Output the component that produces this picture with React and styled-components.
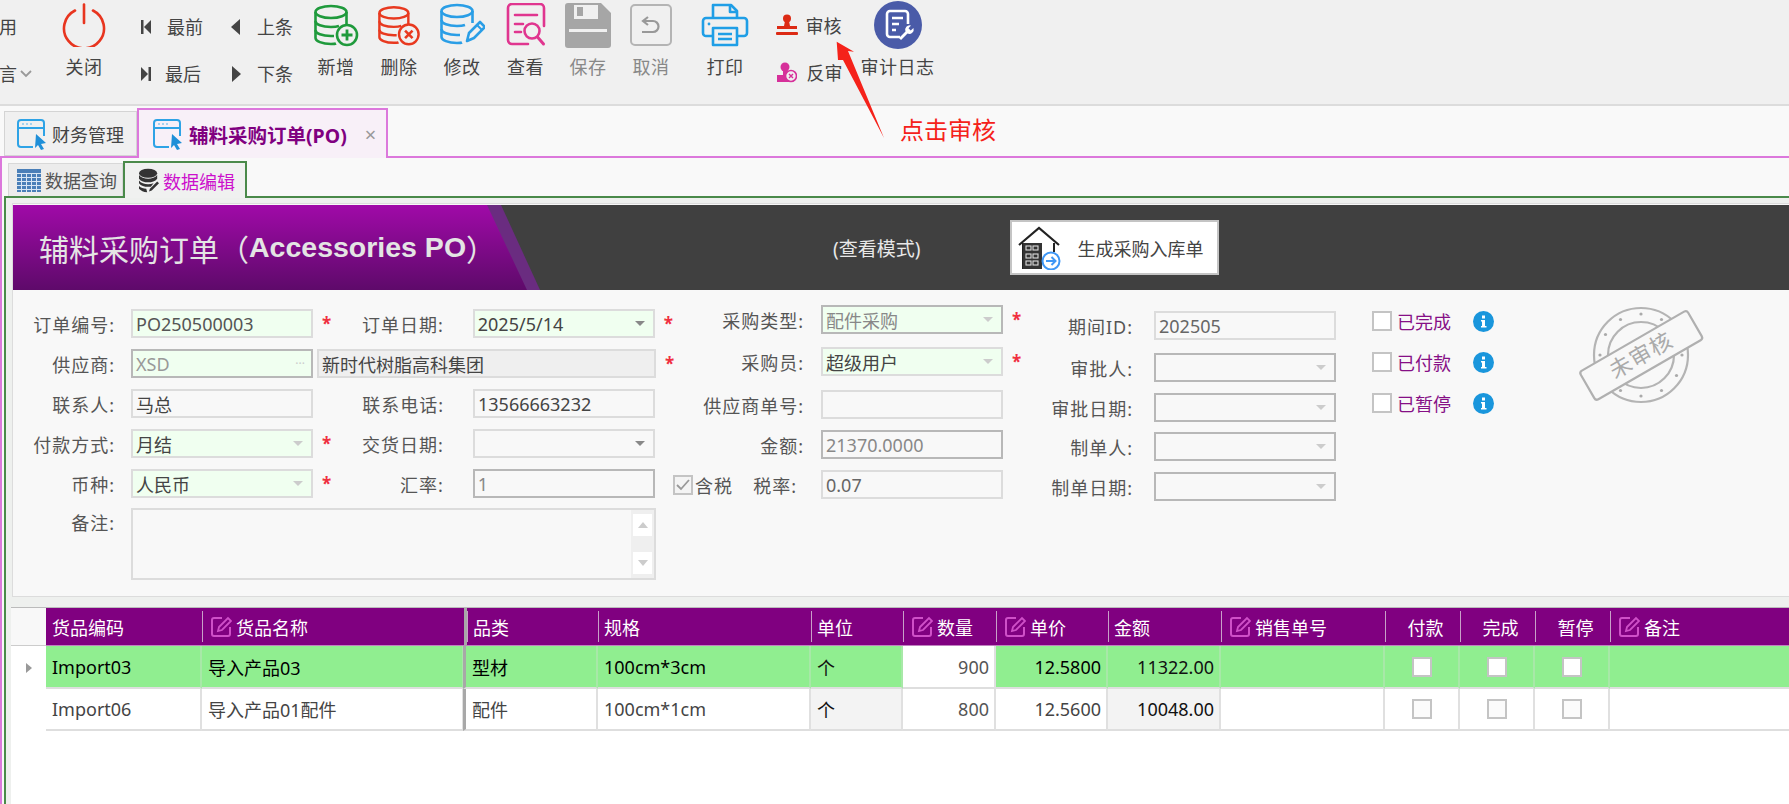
import React from "react";
import styled, { createGlobalStyle } from "styled-components";

const Global = createGlobalStyle`
  html, body { margin: 0; padding: 0; background: #fff; }
  body { width: 1789px; height: 804px; overflow: hidden; font-family: "Noto Sans", "Noto Sans CJK SC", sans-serif; font-size: 18px; color: #444; }
  * { box-sizing: border-box; }
`;

const Page = styled.div`
  position: relative; width: 1789px; height: 804px; overflow: hidden;
  display: flex; flex-direction: column; background: #f9f9f9;
`;

/* ---------- toolbar ---------- */
const Toolbar = styled.div`
  height: 106px; flex: none; display: flex; align-items: flex-start; padding-top: 2px;
  background: #f0f0f0; border-bottom: 2px solid #dcdcdc; line-height: 24px;
`;
const Stub = styled.div`
  width: 60px; flex: none; display: flex; flex-direction: column; gap: 23px; padding-top: 13px; margin-left: -1px;
`;
const StubLine = styled.div` display: flex; align-items: center; gap: 3px; height: 24px; `;
const ToolButton = styled.div`
  width: ${p => p.$w}px; flex: none; display: flex; flex-direction: column; align-items: center;
  color: ${p => (p.$off ? "#888" : "#444")};
`;
const ToolIcon = styled.div` height: 46px; display: flex; align-items: center; justify-content: center; `;
const ToolLabel = styled.div` margin-top: 7px; white-space: nowrap; letter-spacing: .5px; `;
const NavGrid = styled.div`
  width: 195.5px; flex: none; display: grid; grid-template-columns: 91px 1fr; grid-auto-rows: 47px;
  padding: 1px 0 0 31px; 
`;
const NavItem = styled.div` display: flex; align-items: center; gap: ${p => p.$gap}px; `;
const AuditPair = styled.div`
  width: 91px; flex: none; padding-left: 9px; display: flex; flex-direction: column; 
`;
const AuditItem = styled.div` height: 47px; display: flex; align-items: center; gap: ${p => p.$gap}px; `;

/* ---------- tabs ---------- */
const TabStrip = styled.div`
  height: 50px; flex: none; display: flex; align-items: flex-end; padding-left: 4px; position: relative; z-index: 1;
`;
const PageTab = styled.div`
  display: flex; align-items: center; flex: none;
  width: ${p => p.$w}px; height: ${p => (p.$active ? 50 : 45)}px;
  padding-left: ${p => (p.$active ? 13 : 11)}px; gap: ${p => (p.$active ? 5 : 4)}px;
  background: ${p => (p.$active ? "#f8f0f8" : "#f0f0f0")};
  border: ${p => (p.$active ? "2px solid #dc78dc" : "1px solid #d4d4d4")};
  border-bottom: ${p => (p.$active ? "none" : "1px solid #d4d4d4")};
  color: ${p => (p.$active ? "#800080" : "#444")};
  font-weight: ${p => (p.$active ? 700 : 400)};
  font-size: ${p => (p.$active ? 19.5 : 18)}px;
  margin-bottom: ${p => (p.$active ? -2 : 0)}px;
`;
const TabClose = styled.span` margin-left: 13px; color: #999; font-weight: 400; font-size: 20px; `;
const Outer = styled.div`
  flex: 1; min-height: 0; display: flex; flex-direction: column; padding-left: 2px;
  border-top: 2px solid #dc78dc; border-left: 2px solid #dc78dc;
`;
const SubStrip = styled.div`
  height: 38px; flex: none; display: flex; align-items: flex-end; padding-left: 4px; position: relative; z-index: 1;
`;
const SubTab = styled.div`
  flex: none; width: ${p => p.$w}px; height: ${p => (p.$active ? 37 : 33)}px; display: flex; align-items: center;
  gap: 4px; padding-left: ${p => (p.$active ? 14 : 8)}px;
  background: ${p => (p.$active ? "#f0f1f0" : "#ececec")};
  border: ${p => (p.$active ? "2px solid #4a8a4a" : "1px solid #d8d8d8")};
  border-bottom: none;
  color: ${p => (p.$active ? "#cc10cc" : "#555")};
  margin-bottom: ${p => (p.$active ? -2 : 0)}px;
`;
const EditPanel = styled.div`
  flex: 1; min-height: 0; display: flex; flex-direction: column; padding: 5px 0 0 5px; background: #eef0ee;
  border-top: 2px solid #4a8a4a; border-left: 2px solid #4a8a4a;
`;

/* ---------- form ---------- */
const FormPanel = styled.div`
  height: 394px; flex: none; margin-left: 1px; border: 1px solid #dcdcdc; border-right: none; padding-top: 1px;
  display: flex; flex-direction: column; background: #f8f8f8;
`;
const Banner = styled.div` height: 85px; flex: none; display: flex; align-items: center; background: #404040; `;
const TitleEdge = styled.div`
  width: 527px; height: 100%; flex: none; background: #6a2c80;
  clip-path: polygon(0 0, 488px 0, 527px 100%, 0 100%);
`;
const TitleBlock = styled.div`
  width: 514px; height: 100%; padding-left: 26px; display: flex; align-items: center;
  background: linear-gradient(180deg, #a00aa8 0%, #5e0a6a 100%);
  clip-path: polygon(0 0, 474px 0, 514px 100%, 0 100%);
  color: #e4e4e4; font-size: 30px; white-space: nowrap;
  b { font-family: "Liberation Sans", sans-serif; font-size: 28.5px; }
`;
const Mode = styled.div` margin-left: 293px; color: #e8e8e8; font-size: 19px; white-space: nowrap; `;
const MakeButton = styled.div`
  margin-left: 90px; width: 209px; height: 55px; flex: none; display: flex; align-items: center; gap: 16px; padding-left: 6px;
  background: #fff; border: 2px solid #c4c4c4; color: #444;
`;
const FormBody = styled.div` flex: 1; display: flex; align-items: flex-start; padding-top: 15px; `;
const LeftBlock = styled.div` width: 660px; flex: none; margin-top: 4px; display: flex; flex-direction: column; gap: 11px; `;
const Row = styled.div` display: flex; align-items: ${p => (p.$top ? "flex-start" : "center")}; height: ${p => p.$h || 29}px; `;
const Label = styled.div`
  width: ${p => p.$w}px; flex: none; text-align: right; white-space: nowrap; letter-spacing: 1px;
  margin-right: ${p => p.$gap}px; margin-left: ${p => (p.$push ? "auto" : "0")}; color: #555;
`;
const Input = styled.div`
  width: ${p => p.$w || 182}px; height: ${p => p.$h || 29}px; flex: none;
  display: flex; align-items: center; padding: 0 4px 0 3px; white-space: nowrap; overflow: hidden;
  background: ${p => (p.$need ? "#f0fff0" : p.$fill ? "#efefef" : "#f8f8f8")};
  border: 2px solid ${p => (p.$dark ? "#b8b8b8" : "#dcdcdc")};
  color: ${p => p.$color || "#444"};
  margin-left: ${p => p.$ml || 0}px;
`;
const Caret = styled.span`
  margin-left: auto; margin-right: 4px; width: 0; height: 0; flex: none;
  border-left: 5px solid transparent; border-right: 5px solid transparent;
  border-top: 5px solid ${p => (p.$dark ? "#888" : "#ccc")};
`;
const Dots = styled.span` margin-left: auto; color: #ccc; font-size: 12px; letter-spacing: 0; line-height: 1; margin-right: 2px; `;
const Star = styled.span`
  color: #f03040; font-size: 17px; font-weight: 700; margin-left: ${p => p.$ml || 9}px; line-height: 20px;
  visibility: ${p => (p.$ghost ? "hidden" : "visible")};
`;
const RemarkBox = styled(Input)` height: 72px; padding: 0; justify-content: flex-end; margin-top: -1px; `;
const ScrollBar = styled.div` width: 23px; height: 100%; background: #efefef; display: flex; flex-direction: column; justify-content: space-between; padding: 4px 2px; `;
const ScrollBtn = styled.div`
  height: 22px; background: #fff; display: flex; align-items: center; justify-content: center;
  &::before { content: ""; border-left: 5px solid transparent; border-right: 5px solid transparent;
    ${p => (p.$up ? "border-bottom" : "border-top")}: 6px solid #ccc; }
`;
const Col = styled.div` flex: none; width: ${p => p.$w}px; padding-top: ${p => p.$pt || 0}px; display: flex; flex-direction: column; `;
const ColRow = styled(Row)` margin-top: ${p => p.$mt || 0}px; `;
const TaxLabel = styled.div` width: 131px; flex: none; margin-right: 17px; display: flex; align-items: center; justify-content: space-between; color: #555; letter-spacing: 1px; `;
const TaxCheck = styled.div` display: flex; align-items: center; gap: 2px; `;
const TaxName = styled.span` padding-right: 7px; `;
const Box = styled.span`
  width: ${p => p.$s || 20}px; height: ${p => p.$s || 20}px; flex: none; display: inline-flex; align-items: center; justify-content: center;
  background: ${p => p.$bg || "#fff"}; border: 2px solid #c4c4c4;
`;
const FlagCol = styled.div` flex: none; margin-left: 36px; padding-top: 6px; display: flex; flex-direction: column; gap: 21px; `;
const Flag = styled.div` display: flex; align-items: center; height: 20px; color: #860f86; `;
const FlagText = styled.span` margin-left: 5px; width: 76px; white-space: nowrap; `;
const StampWrap = styled.div` margin-left: 79px; flex: none; width: 136px; height: 100px; `;
const Band = styled.div` height: 10px; flex: none; `;

/* ---------- grid ---------- */
const Grid = styled.div`
  flex: 1; min-height: 0; background: #fff; border-top: 1px solid #bbb;
  display: grid; align-content: start;
  grid-template-columns: 35px 156px 262px 134px 213px 92px 93px 112px 113px 164px 75px 75px 75px 195px;
  grid-template-rows: 38px 43px 42px;
`;
const Corner = styled.div` background: #f8f8f8; border-bottom: 1px solid #ccc; `;
const RowHead = styled.div`
  display: flex; align-items: center; justify-content: center; padding-left: 1px;
  &::before { content: ""; ${p => p.$on ? "border-top:5px solid transparent;border-bottom:5px solid transparent;border-left:6px solid #999;" : ""} }
`;
const Head = styled.div`
  position: relative; background: #800080; color: #fff; display: flex; align-items: center; gap: 4px; white-space: nowrap;
  padding-left: ${p => (p.$icon ? 8 : 6)}px; justify-content: ${p => (p.$center ? "center" : "flex-start")};
  border-bottom: 1px solid #c080c0;
  ${p => p.$first ? "" : `&::before { content: ""; position: absolute; left: 0; top: 3px; bottom: 3px; width: 1px; background: #c8a0c8; }`}
  ${p => p.$thick ? "border-left: 3px solid #a8a8a8;" : ""}
`;
const Cell = styled.div`
  display: flex; align-items: center; white-space: nowrap; padding: 0 5px 0 6px;
  justify-content: ${p => p.$align || "flex-start"};
  background: ${p => p.$bg};
  color: ${p => p.$color || "#444"};
  border-right: 2px solid ${p => (p.$hi ? "#a8e8a8" : "#e0e0e0")};
  border-bottom: 2px solid #dedede;
  ${p => p.$thick ? "border-left: 3px solid #a8a8a8; margin-left: -1px;" : ""}
`;

/* ---------- overlay ---------- */
const ArrowMark = styled.svg` position: absolute; left: 830px; top: 36px; `;
const Note = styled.div` position: absolute; left: 900px; top: 113px; color: #f5221a; font-size: 24px; line-height: 34px; white-space: nowrap; `;

/* ---------- icons ---------- */
const PowerIcon = () => (
  <svg width="44" height="44" viewBox="0 0 44 44" fill="none" stroke="#e8351f" strokeWidth="2.6" strokeLinecap="round">
    <path d="M13 7.5A20 20 0 1 0 31 7.5" /><path d="M22 1.5V20" />
  </svg>
);
const DbBase = ({ c }) => (
  <g fill="none" stroke={c} strokeWidth="2.6">
    <ellipse cx="17" cy="8" rx="15.5" ry="6" />
    <path d="M1.5 8V34C1.5 37 8 40 17 40c2 0 4 0 5-.5" />
    <path d="M32.5 8V20" />
    <path d="M1.5 17c0 3.5 6.5 6 15.5 6 3 0 6-.3 8-1" />
    <path d="M1.5 26c0 3.5 6.5 6 15.5 6h3" />
  </g>
);
const DbAdd = () => (
  <svg width="45" height="43" viewBox="0 0 45 43">
    <DbBase c="#1f9a3c" /><circle cx="33" cy="31" r="10" fill="#f0f0f0" stroke="#1f9a3c" strokeWidth="2.6" />
    <path d="M33 25.5v11M27.5 31h11" stroke="#1f9a3c" strokeWidth="2.8" />
  </svg>
);
const DbDel = () => (
  <svg width="42" height="43" viewBox="0 0 45 43">
    <DbBase c="#e8391f" /><circle cx="33" cy="31" r="10.5" fill="#f0f0f0" stroke="#e8391f" strokeWidth="2.6" />
    <path d="M29 27l8 8M37 27l-8 8" stroke="#e8391f" strokeWidth="2.8" />
  </svg>
);
const DbEdit = () => (
  <svg width="45" height="45" viewBox="0 0 45 45">
    <DbBase c="#2a9ee6" />
    <path d="M27 38l2-8 11-11 5 5-11 11z" fill="#f0f0f0" stroke="#2a9ee6" strokeWidth="2.6" strokeLinejoin="round" />
    <path d="M37 22l5 5" stroke="#2a9ee6" strokeWidth="2" />
  </svg>
);
const ViewIcon = () => (
  <svg width="40" height="44" viewBox="0 0 40 44" fill="none" stroke="#e0358f" strokeWidth="2.6" strokeLinecap="round">
    <path d="M22 41H6a4 4 0 0 1-4-4V5a4 4 0 0 1 4-4h28a4 4 0 0 1 4 4v18" />
    <path d="M9 12h22M9 21h8M9 29h6" />
    <circle cx="26" cy="28" r="7.5" /><path d="M31.5 34l6 7" strokeWidth="3" />
  </svg>
);
const SaveIcon = () => (
  <svg width="46" height="45" viewBox="0 0 46 45">
    <path d="M3 0H36L46 10V42a3 3 0 0 1-3 3H3a3 3 0 0 1-3-3V3a3 3 0 0 1 3-3z" fill="#a6a6a6" />
    <rect x="9" y="2" width="24" height="14" fill="#f0f0f0" /><rect x="12" y="4" width="6" height="9" fill="#a6a6a6" />
    <rect x="4" y="26" width="38" height="3" fill="#f0f0f0" />
  </svg>
);
const UndoIcon = () => (
  <svg width="42" height="42" viewBox="0 0 42 42" fill="none" stroke="#b4b4b4" strokeWidth="2">
    <rect x="1" y="1" width="40" height="40" rx="4" />
    <path d="M18 13l-5 4 5 4M13.500 17H23a5.500 5.500 0 0 1 0 11H12" stroke="#999" strokeWidth="2.2" />
  </svg>
);
const PrintIcon = () => (
  <svg width="48" height="44" viewBox="0 0 48 44" fill="none" stroke="#1f9ee6" strokeWidth="2.6" strokeLinejoin="round">
    <path d="M12 15V2h18l6 6v7" /><path d="M29 2v7h7" />
    <path d="M11 33H5a3 3 0 0 1-3-3V18a3 3 0 0 1 3-3h38a3 3 0 0 1 3 3v12a3 3 0 0 1-3 3h-6" />
    <rect x="12" y="25" width="24" height="17" strokeWidth="2.6" />
    <path d="M17 31h14M17 36h14" strokeWidth="2.6" />
    <circle cx="8" cy="21" r="1.4" fill="#1f9ee6" stroke="none" />
  </svg>
);
const StampIcon = () => (
  <svg width="22" height="23" viewBox="0 0 22 23" fill="#dc2a14">
    <circle cx="11" cy="4.500" r="4" /><path d="M9 7h4l1 5h7v3H1v-3h7z" /><rect x="0" y="18" width="22" height="3" rx="1" />
  </svg>
);
const UnstampIcon = () => (
  <svg width="21" height="21" viewBox="0 0 21 21">
    <circle cx="9" cy="5" r="4.500" fill="#d6309a" /><path d="M7 8h4v5h2v7H1v-7h6z" fill="#d6309a" />
    <circle cx="15" cy="14" r="5.500" fill="#f0f0f0" stroke="#d6309a" strokeWidth="1.600" />
    <path d="M13 12l4 4M17 12l-4 4" stroke="#d6309a" strokeWidth="1.400" />
  </svg>
);
const LogIcon = () => (
  <svg width="48" height="48" viewBox="0 0 48 48">
    <circle cx="24" cy="24" r="24" fill="#4a5ba8" />
    <path d="M26 36H16a3 3 0 0 1-3-3V13a3 3 0 0 1 3-3h15a3 3 0 0 1 3 3v10" fill="none" stroke="#fff" strokeWidth="2.600" />
    <path d="M18 17h11M18 23h7M18 29h4" stroke="#fff" strokeWidth="2.400" />
    <path d="M25 37l6.500-6.500a4.500 4.500 0 0 1 5.500-6l-2.500 2.800 2.200 2.200 2.800-2.500a4.500 4.500 0 0 1-6 5.500L27 39z" fill="#fff" />
  </svg>
);
const SkipIcon = ({ dir }) => (
  <svg width="12" height="16" viewBox="0 0 12 16" fill="#444">
    {dir === "first" ? <><rect x="1" y="1" width="2.500" height="14" /><path d="M11 1v14L4 8z" /></> : <><rect x="8.500" y="1" width="2.500" height="14" /><path d="M1 1v14l7-7z" /></>}
  </svg>
);
const TriIcon = ({ dir }) => (
  <svg width="10" height="16" viewBox="0 0 10 16" fill="#444">
    <path d={dir === "left" ? "M9 0v16L0 8z" : "M1 0v16l9-8z"} />
  </svg>
);
const Chevron = () => (
  <svg width="12" height="8" viewBox="0 0 12 8" fill="none" stroke="#999" strokeWidth="1.800"><path d="M1 1l5 5 5-5" /></svg>
);
const WindowIcon = () => (
  <svg width="32" height="32" viewBox="0 0 32 32" fill="none">
    <path d="M17 29H5a3 3 0 0 1-3-3V5a3 3 0 0 1 3-3h20a3 3 0 0 1 3 3v13" stroke="#2ea3e6" strokeWidth="2" />
    <path d="M2 10h26" stroke="#2ea3e6" strokeWidth="2" />
    <circle cx="7" cy="6" r="1" fill="#8cc8ee" /><circle cx="11" cy="6" r="1" fill="#8cc8ee" /><circle cx="15" cy="6" r="1" fill="#8cc8ee" />
    <path d="M20 16l10 9-5 1 3 5-3 1-3-5-3 3z" fill="#1f8fd8" />
  </svg>
);
const TableIcon = () => (
  <svg width="24" height="23" viewBox="0 0 24 23">
    <rect width="24" height="23" fill="#4a7fb8" />
    {[5, 10, 15, 20].map(x => <rect key={x} x={x - 1} y="4" width="1" height="19" fill="#d8e6f4" />)}
    {[4, 8, 12, 16, 20].map(y => <rect key={y} x="0" y={y} width="24" height="1" fill="#d8e6f4" />)}
  </svg>
);
const StackIcon = () => (
  <svg width="20" height="25" viewBox="0 0 22 26" fill="#333">
    <ellipse cx="10" cy="5" rx="10" ry="5" />
    <path d="M0 7c2 3 6 4 10 4s8-1 10-4v4c-2 3-6 4-10 4S2 14 0 11z" />
    <path d="M0 13c2 3 6 4 10 4 2 0 4-.2 6-1l-3 4H10c-4 0-8-1-10-4z" />
    <path d="M0 19c2 2 5 3 8 3l1 4c-4 0-7-2-9-4z" />
    <path d="M12 22l8-8 2 2-8 8-3 1z" />
  </svg>
);
const HouseIcon = () => (
  <svg width="43" height="44" viewBox="0 0 43 44">
    <path d="M1 19L21 2l20 17" fill="none" stroke="#222" strokeWidth="2.200" />
    <path d="M5 17V43M36 17V26" fill="none" stroke="#222" strokeWidth="2" />
    <rect x="5" y="17" width="19" height="26" fill="#333" />
    {[20, 28, 35].map(y => [8, 15].map(x => <rect key={`${x}${y}`} x={x} y={y} width="5" height="4" fill="none" stroke="#ddd" strokeWidth="1.100" />))}
    <circle cx="33" cy="35" r="8.500" fill="#fff" stroke="#3f97f5" strokeWidth="2" />
    <path d="M28 35h9M33.500 31l4 4-4 4" fill="none" stroke="#3f97f5" strokeWidth="2" />
  </svg>
);
const InfoIcon = () => (
  <svg width="21" height="21" viewBox="0 0 21 21" style={{ flex: "none" }}>
    <circle cx="10.500" cy="10.500" r="10.500" fill="#1a96dc" />
    <rect x="9" y="4.500" width="3" height="3" fill="#fff" /><path d="M8 9h4v6h1.500v1.500h-5.500V15H9v-4.500H8z" fill="#fff" />
  </svg>
);
const TickIcon = () => (
  <svg width="14" height="12" viewBox="0 0 14 12" fill="none" stroke="#999" strokeWidth="1.800"><path d="M1 6l4 4 8-9" /></svg>
);
const EditMark = ({ s = 22 }) => (
  <svg width={s} height={s} viewBox="0 0 22 22" fill="none" stroke="#cf50c8" strokeWidth="2" style={{ flex: "none" }}>
    <path d="M12 2H4a2 2 0 0 0-2 2v14a2 2 0 0 0 2 2h14a2 2 0 0 0 2-2V11" />
    <path d="M8 15l1-4 9-9 3 3-9 9z" strokeWidth="1.800" />
  </svg>
);
const Seal = () => {
  const dots = [];
  for (let a = 0; a < 360; a += 30) {
    const r = (a * Math.PI) / 180;
    dots.push(<circle key={a} cx={68 + 41 * Math.cos(r)} cy={50 + 41 * Math.sin(r)} r="1.600" fill="#aaa" />);
  }
  return (
    <svg width="136" height="100" viewBox="0 0 136 100">
      <circle cx="68" cy="50" r="47" fill="none" stroke="#b4b4b4" strokeWidth="2.200" />
      <circle cx="68" cy="50" r="33" fill="none" stroke="#b4b4b4" strokeWidth="2.200" />
      {dots}
      <g transform="rotate(-30 68 50)">
        <rect x="6" y="34" width="124" height="33" rx="3" fill="#f8f8f8" stroke="#b0b0b0" strokeWidth="2.200" />
        <text x="68" y="58" textAnchor="middle" fontSize="22" fill="#aaa" fontFamily="Noto Sans CJK SC, sans-serif" letterSpacing="1">未审核</text>
      </g>
    </svg>
  );
};

const columns = [
  { t: "货品编码", first: true },
  { t: "货品名称", e: true },
  { t: "品类", thick: true },
  { t: "规格" },
  { t: "单位" },
  { t: "数量", e: true },
  { t: "单价", e: true },
  { t: "金额" },
  { t: "销售单号", e: true },
  { t: "付款", c: true },
  { t: "完成", c: true },
  { t: "暂停", c: true },
  { t: "备注", e: true },
];
const rows = [
  { hi: true, v: ["Import03", "导入产品03", "型材", "100cm*3cm", "个", "900", "12.5800", "11322.00"] },
  { hi: false, v: ["Import06", "导入产品01配件", "配件", "100cm*1cm", "个", "800", "12.5600", "10048.00"] },
];

const GridRow = ({ row }) => {
  const bg = row.hi ? "#90ee90" : "#fff";
  const strong = row.hi ? "#000" : "#444";
  return (
    <>
      <RowHead $on={row.hi} />
      <Cell $bg={bg} $hi={row.hi} $color={strong}>{row.v[0]}</Cell>
      <Cell $bg={bg} $hi={row.hi} $color={strong}>{row.v[1]}</Cell>
      <Cell $bg={bg} $hi={row.hi} $color={strong} $thick>{row.v[2]}</Cell>
      <Cell $bg={bg} $hi={row.hi} $color={strong}>{row.v[3]}</Cell>
      <Cell $bg={row.hi ? bg : "#f3f3f3"} $hi={row.hi} $color="#111">{row.v[4]}</Cell>
      <Cell $bg="#fff" $align="flex-end" $color="#555">{row.v[5]}</Cell>
      <Cell $bg={bg} $hi={row.hi} $align="flex-end" $color={strong}>{row.v[6]}</Cell>
      <Cell $bg={row.hi ? bg : "#f3f3f3"} $hi={row.hi} $align="flex-end" $color="#111">{row.v[7]}</Cell>
      <Cell $bg={bg} $hi={row.hi} />
      {[0, 1, 2].map(i => (
        <Cell key={i} $bg={bg} $hi={row.hi} $align="center"><Box $bg={row.hi ? "#fff" : "#fbfbfb"} /></Cell>
      ))}
      <Cell $bg={bg} $hi={row.hi} />
    </>
  );
};

export default function App() {
  return (
    <Page>
      <Global />
      <Toolbar>
        <Stub>
          <StubLine>用</StubLine>
          <StubLine>言<Chevron /></StubLine>
        </Stub>
        <ToolButton $w={50}><ToolIcon><PowerIcon /></ToolIcon><ToolLabel>关闭</ToolLabel></ToolButton>
        <NavGrid>
          <NavItem $gap={15}><SkipIcon dir="first" />最前</NavItem>
          <NavItem $gap={16}><TriIcon dir="left" />上条</NavItem>
          <NavItem $gap={13}><SkipIcon dir="last" />最后</NavItem>
          <NavItem $gap={16}><TriIcon dir="right" />下条</NavItem>
        </NavGrid>
        <ToolButton $w={63}><ToolIcon><DbAdd /></ToolIcon><ToolLabel>新增</ToolLabel></ToolButton>
        <ToolButton $w={63}><ToolIcon><DbDel /></ToolIcon><ToolLabel>删除</ToolLabel></ToolButton>
        <ToolButton $w={63}><ToolIcon><DbEdit /></ToolIcon><ToolLabel>修改</ToolLabel></ToolButton>
        <ToolButton $w={64}><ToolIcon><ViewIcon /></ToolIcon><ToolLabel>查看</ToolLabel></ToolButton>
        <ToolButton $w={61} $off><ToolIcon><SaveIcon /></ToolIcon><ToolLabel>保存</ToolLabel></ToolButton>
        <ToolButton $w={65} $off><ToolIcon><UndoIcon /></ToolIcon><ToolLabel>取消</ToolLabel></ToolButton>
        <ToolButton $w={83}><ToolIcon><PrintIcon /></ToolIcon><ToolLabel>打印</ToolLabel></ToolButton>
        <AuditPair>
          <AuditItem $gap={8}><StampIcon />审核</AuditItem>
          <AuditItem $gap={10}><UnstampIcon />反审</AuditItem>
        </AuditPair>
        <ToolButton $w={80}><ToolIcon><LogIcon /></ToolIcon><ToolLabel>审计日志</ToolLabel></ToolButton>
      </Toolbar>

      <TabStrip>
        <PageTab $w={133}><WindowIcon />财务管理</PageTab>
        <PageTab $w={251} $active><WindowIcon />辅料采购订单(PO)<TabClose>×</TabClose></PageTab>
      </TabStrip>

      <Outer>
        <SubStrip>
          <SubTab $w={115}><TableIcon />数据查询</SubTab>
          <SubTab $w={124} $active><StackIcon />数据编辑</SubTab>
        </SubStrip>
        <EditPanel>
          <FormPanel>
            <Banner>
              <TitleEdge>
                <TitleBlock>辅料采购订单（<b>Accessories PO</b>）</TitleBlock>
              </TitleEdge>
              <Mode>(查看模式)</Mode>
              <MakeButton><HouseIcon />生成采购入库单</MakeButton>
            </Banner>
            <FormBody>
              <LeftBlock>
                <Row>
                  <Label $w={102} $gap={16}>订单编号:</Label>
                  <Input $need $color="#555">PO250500003</Input>
                  <Star>*</Star>
                  <Label $w={112} $gap={29} $push>订单日期:</Label>
                  <Input $need>2025/5/14<Caret $dark /></Input>
                  <Star>*</Star>
                </Row>
                <Row>
                  <Label $w={102} $gap={16}>供应商:</Label>
                  <Input $need $dark $color="#999">XSD<Dots>···</Dots></Input>
                  <Input $w={339} $ml={4} $fill>新时代树脂高科集团</Input>
                  <Star>*</Star>
                </Row>
                <Row>
                  <Label $w={102} $gap={16}>联系人:</Label>
                  <Input>马总</Input>
                  <Label $w={131} $gap={29}>联系电话:</Label>
                  <Input>13566663232</Input>
                </Row>
                <Row>
                  <Label $w={102} $gap={16}>付款方式:</Label>
                  <Input $need>月结<Caret /></Input>
                  <Star>*</Star>
                  <Label $w={112} $gap={29} $push>交货日期:</Label>
                  <Input><Caret $dark /></Input>
                  <Star $ghost>*</Star>
                </Row>
                <Row>
                  <Label $w={102} $gap={16}>币种:</Label>
                  <Input $need>人民币<Caret /></Input>
                  <Star>*</Star>
                  <Label $w={112} $gap={29} $push>汇率:</Label>
                  <Input $dark $color="#888">1</Input>
                  <Star $ghost>*</Star>
                </Row>
                <Row $h={72} $top>
                  <Label $w={102} $gap={16}>备注:</Label>
                  <RemarkBox $w={525}><ScrollBar><ScrollBtn $up /><ScrollBtn /></ScrollBar></RemarkBox>
                </Row>
              </LeftBlock>

              <Col $w={357}>
                <ColRow>
                  <Label $w={131} $gap={17}>采购类型:</Label>
                  <Input $need $dark $color="#888">配件采购<Caret /></Input>
                  <Star>*</Star>
                </ColRow>
                <ColRow $mt={13}>
                  <Label $w={131} $gap={17}>采购员:</Label>
                  <Input $need>超级用户<Caret /></Input>
                  <Star>*</Star>
                </ColRow>
                <ColRow $mt={14}>
                  <Label $w={131} $gap={17}>供应商单号:</Label>
                  <Input />
                </ColRow>
                <ColRow $mt={11}>
                  <Label $w={131} $gap={17}>金额:</Label>
                  <Input $dark $color="#888">21370.0000</Input>
                </ColRow>
                <ColRow $mt={11}>
                  <TaxLabel>
                    <TaxCheck><Box $bg="#f4f4f4"><TickIcon /></Box>含税</TaxCheck>
                    <TaxName>税率:</TaxName>
                  </TaxLabel>
                  <Input $color="#666">0.07</Input>
                </ColRow>
              </Col>

              <Col $w={306} $pt={6}>
                <ColRow>
                  <Label $w={103} $gap={21}>期间ID:</Label>
                  <Input $color="#666">202505</Input>
                </ColRow>
                <ColRow $mt={13}>
                  <Label $w={103} $gap={21}>审批人:</Label>
                  <Input $dark><Caret /></Input>
                </ColRow>
                <ColRow $mt={11}>
                  <Label $w={103} $gap={21}>审批日期:</Label>
                  <Input $dark><Caret /></Input>
                </ColRow>
                <ColRow $mt={10}>
                  <Label $w={103} $gap={21}>制单人:</Label>
                  <Input $dark><Caret /></Input>
                </ColRow>
                <ColRow $mt={11}>
                  <Label $w={103} $gap={21}>制单日期:</Label>
                  <Input $dark><Caret /></Input>
                </ColRow>
              </Col>

              <FlagCol>
                <Flag><Box /><FlagText>已完成</FlagText><InfoIcon /></Flag>
                <Flag><Box /><FlagText>已付款</FlagText><InfoIcon /></Flag>
                <Flag><Box /><FlagText>已暂停</FlagText><InfoIcon /></Flag>
              </FlagCol>
              <StampWrap><Seal /></StampWrap>
            </FormBody>
          </FormPanel>
          <Band />
          <Grid>
            <Corner />
            {columns.map(c => (
              <Head key={c.t} $first={c.first} $thick={c.thick} $icon={c.e} $center={c.c}>
                {c.e && <EditMark />}{c.t}
              </Head>
            ))}
            {rows.map((r, i) => <GridRow key={i} row={r} />)}
          </Grid>
        </EditPanel>
      </Outer>

      <ArrowMark width="60" height="106" viewBox="830 36 60 106">
        <polygon points="836.700,41.700 854,51.700 848,51 884,138 843,60 838,60" fill="#f5221a" />
      </ArrowMark>
      <Note>点击审核</Note>
    </Page>
  );
}
